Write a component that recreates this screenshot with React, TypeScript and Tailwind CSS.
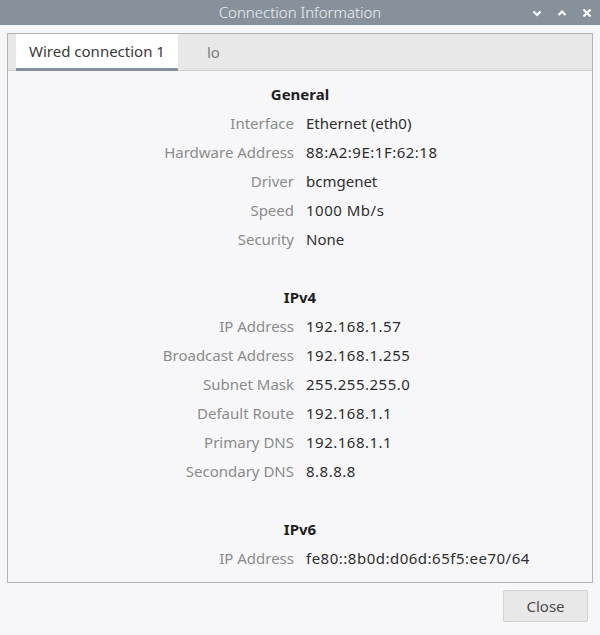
import React from "react";

const font = { fontFamily: '"Noto Sans", "Lato", sans-serif' };

type Row = [string, string, boolean?];

const sections: { title: string; rows: Row[] }[] = [
  {
    title: "General",
    rows: [
      ["Interface", "Ethernet (eth0)"],
      ["Hardware Address", "88:A2:9E:1F:62:18", true],
      ["Driver", "bcmgenet"],
      ["Speed", "1000 Mb/s", true],
      ["Security", "None"],
    ],
  },
  {
    title: "IPv4",
    rows: [
      ["IP Address", "192.168.1.57", true],
      ["Broadcast Address", "192.168.1.255", true],
      ["Subnet Mask", "255.255.255.0", true],
      ["Default Route", "192.168.1.1", true],
      ["Primary DNS", "192.168.1.1", true],
      ["Secondary DNS", "8.8.8.8", true],
    ],
  },
  {
    title: "IPv6",
    rows: [["IP Address", "fe80::8b0d:d06d:65f5:ee70/64", true]],
  },
];

export default function App() {
  return (
    <div
      className="w-[600px] h-[635px] bg-[#f7f7f9] flex flex-col overflow-hidden text-[15px]"
      style={font}
    >
      <div className="relative h-[25px] bg-[#87919b] flex items-center justify-center shrink-0">
        <span className="text-[15px] font-light text-[#eef0f2]">Connection Information</span>
        <div className="absolute right-[8px] top-0 h-[25px] flex items-center gap-[15px]">
          <svg width="10" height="10" viewBox="0 0 10 10">
            <path d="M1.5 3.5 L5 7 L8.5 3.5" fill="none" stroke="#fff" strokeWidth="2.2" />
          </svg>
          <svg width="10" height="10" viewBox="0 0 10 10">
            <path d="M1.5 7 L5 3.5 L8.5 7" fill="none" stroke="#fff" strokeWidth="2.2" />
          </svg>
          <svg width="10" height="10" viewBox="0 0 10 10">
            <path d="M1.5 1.5 L8.5 8.5 M8.5 1.5 L1.5 8.5" fill="none" stroke="#fff" strokeWidth="2.2" />
          </svg>
        </div>
      </div>

      <div className="px-[7px] pt-[8px]">
        <div className="h-[550px] border border-[#b3b3b3] flex flex-col">
          <div className="h-[37px] bg-[#e8e8e9] border-b border-[#cfcfd1] flex pl-[8px] shrink-0">
            <div className="w-[162px] bg-white border-b-[3px] border-[#87919b] flex items-center justify-center text-[#3a3a3a] -mb-px">
              Wired connection 1
            </div>
            <div className="pl-[29px] flex items-center text-[#7d7d7d]">lo</div>
          </div>
          <div className="pt-[9px] flex flex-col">
            {sections.map((s, i) => (
              <div key={s.title} className={i > 0 ? "pt-[29px]" : ""}>
                <div className="h-[29px] flex items-center justify-center font-bold text-[#1f1f1f]">
                  {s.title}
                </div>
                {s.rows.map(([k, v, num]) => (
                  <div key={k + v} className="h-[29px] flex items-center">
                    <div className="w-[286px] text-right text-[#8b8b8b]">{k}</div>
                    <div
                      className={
                        num
                          ? "pl-[12px] text-[#2e2e2e] tracking-[0.5px]"
                          : "pl-[12px] text-[#2e2e2e]"
                      }
                    >
                      {v}
                    </div>
                  </div>
                ))}
              </div>
            ))}
          </div>
        </div>
      </div>

      <div className="flex justify-end pr-[12px] pt-[7px]">
        <button className="w-[85px] h-[32px] bg-[#e8e8e9] border border-[#d2d2d4] rounded-[2px] text-[#4a4a4a]">
          Close
        </button>
      </div>
    </div>
  );
}
